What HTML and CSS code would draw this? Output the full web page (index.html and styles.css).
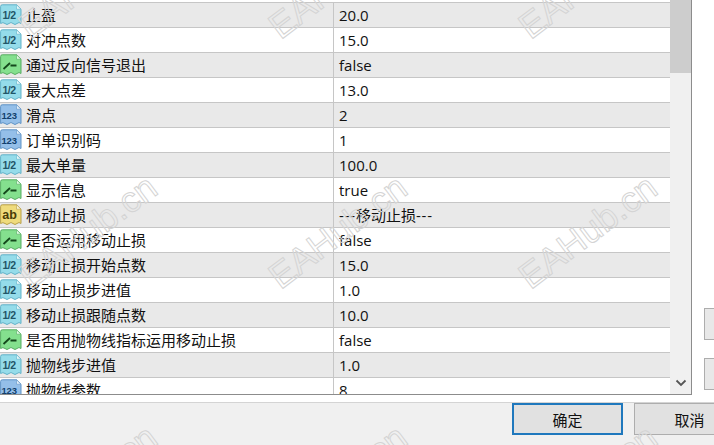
FILE: index.html
```html
<!DOCTYPE html>
<html lang="zh">
<head>
<meta charset="utf-8">
<title>EA</title>
<link rel="stylesheet" href="styles.css">
</head>
<body>
<svg class="defs" width="0" height="0">
  <defs>
    <path id="doc" d="M.6 2.5 Q.6 .8 2.3 .8 H16.5 L21 5.2 V19.5 Q19 17.5 17 19.5 Q15 21.5 13 19.5 Q11 17.5 9 19.5 Q7 21.5 5 19.5 Q3 17.8 .6 19.5 Z"/>
    <path id="fold" d="M16.5 .8 V5.2 H21 Z"/>
    <g id="i-half">
      <use href="#doc" fill="#95dcea" stroke="#62b3c9"/>
      <use href="#fold" fill="#e6f8fb" stroke="#62b3c9" stroke-width=".6"/>
      <text x="2.6" y="14.5" class="glyph half">1/2</text>
    </g>
    <g id="i-int">
      <use href="#doc" fill="#94bfe9" stroke="#5f93c6"/>
      <use href="#fold" fill="#e3effa" stroke="#5f93c6" stroke-width=".6"/>
      <text x="1.4" y="15" class="glyph int">123</text>
    </g>
    <g id="i-bool">
      <use href="#doc" fill="#84e08e" stroke="#57ad62"/>
      <use href="#fold" fill="#e2fae5" stroke="#57ad62" stroke-width=".6"/>
      <path d="M3.5 15 L10 9 M10.5 11.5 H16.5" fill="none" stroke="#14481c" stroke-width="1.8"/>
    </g>
    <g id="i-str">
      <use href="#doc" fill="#efdb7c" stroke="#b8a048"/>
      <use href="#fold" fill="#fbf5d6" stroke="#b8a048" stroke-width=".6"/>
      <text x="2.2" y="15" class="glyph str">ab</text>
    </g>
  </defs>
</svg>
<div class="dialog">
  <div class="top">
    <div class="panel">
      <div class="list">
        <div class="sliver"></div>
        <div class="row odd"><div class="name"><svg class="ico" viewBox="0 0 22 22"><use href="#i-half"/></svg>止盈</div><div class="val">20.0</div></div>
        <div class="row"><div class="name"><svg class="ico" viewBox="0 0 22 22"><use href="#i-half"/></svg>对冲点数</div><div class="val">15.0</div></div>
        <div class="row odd"><div class="name"><svg class="ico" viewBox="0 0 22 22"><use href="#i-bool"/></svg>通过反向信号退出</div><div class="val">false</div></div>
        <div class="row"><div class="name"><svg class="ico" viewBox="0 0 22 22"><use href="#i-half"/></svg>最大点差</div><div class="val">13.0</div></div>
        <div class="row odd"><div class="name"><svg class="ico" viewBox="0 0 22 22"><use href="#i-int"/></svg>滑点</div><div class="val">2</div></div>
        <div class="row"><div class="name"><svg class="ico" viewBox="0 0 22 22"><use href="#i-int"/></svg>订单识别码</div><div class="val">1</div></div>
        <div class="row odd"><div class="name"><svg class="ico" viewBox="0 0 22 22"><use href="#i-half"/></svg>最大单量</div><div class="val">100.0</div></div>
        <div class="row"><div class="name"><svg class="ico" viewBox="0 0 22 22"><use href="#i-bool"/></svg>显示信息</div><div class="val">true</div></div>
        <div class="row odd"><div class="name"><svg class="ico" viewBox="0 0 22 22"><use href="#i-str"/></svg>移动止损</div><div class="val"><span class="dash">---</span>移动止损<span class="dash">---</span></div></div>
        <div class="row"><div class="name"><svg class="ico" viewBox="0 0 22 22"><use href="#i-bool"/></svg>是否运用移动止损</div><div class="val">false</div></div>
        <div class="row odd"><div class="name"><svg class="ico" viewBox="0 0 22 22"><use href="#i-half"/></svg>移动止损开始点数</div><div class="val">15.0</div></div>
        <div class="row"><div class="name"><svg class="ico" viewBox="0 0 22 22"><use href="#i-half"/></svg>移动止损步进值</div><div class="val">1.0</div></div>
        <div class="row odd"><div class="name"><svg class="ico" viewBox="0 0 22 22"><use href="#i-half"/></svg>移动止损跟随点数</div><div class="val">10.0</div></div>
        <div class="row"><div class="name"><svg class="ico" viewBox="0 0 22 22"><use href="#i-bool"/></svg>是否用抛物线指标运用移动止损</div><div class="val">false</div></div>
        <div class="row odd"><div class="name"><svg class="ico" viewBox="0 0 22 22"><use href="#i-half"/></svg>抛物线步进值</div><div class="val">1.0</div></div>
        <div class="row"><div class="name"><svg class="ico" viewBox="0 0 22 22"><use href="#i-int"/></svg>抛物线参数</div><div class="val">8</div></div>
      </div>
      <div class="scrollbar">
        <div class="thumb"></div>
        <svg class="arrow" width="12" height="8" viewBox="0 0 12 8"><path d="M1.5 1.5 L6 6 L10.5 1.5" fill="none" stroke="#555" stroke-width="1.8"/></svg>
      </div>
    </div>
    <div class="side">
      <div class="sidebtn"></div>
      <div class="sidebtn"></div>
    </div>
  </div>
  <div class="footer">
    <button class="btn primary">确定</button>
    <button class="btn">取消</button>
  </div>
  <div class="marks">
    <span class="mark m1">EAHub.cn</span>
    <span class="mark m2">EAHub.cn</span>
    <span class="mark m3">EAHub.cn</span>
    <span class="mark m4">EAHub.cn</span>
    <span class="mark m5">EAHub.cn</span>
    <span class="mark m6">EAHub.cn</span>
    <span class="mark m7">EAHub.cn</span>
    <span class="mark m8">EAHub.cn</span>
    <span class="mark m9">EAHub.cn</span>
  </div>
</div>
</body>
</html>
```
FILE: styles.css
```css
* { box-sizing: border-box; }
html, body { margin: 0; padding: 0; }
body {
  width: 714px;
  height: 445px;
  overflow: hidden;
  background: #fff;
  font-family: "Open Sans", "Noto Sans CJK SC", sans-serif;
  color: #111;
}
.defs { position: absolute; }
.glyph { font-family: "Liberation Sans", sans-serif; font-weight: 700; }
.half { font-size: 10.5px; letter-spacing: -.6px; fill: #1f5567; }
.int { font-size: 9.5px; letter-spacing: -.1px; fill: #123f6e; }
.str { font-size: 12.5px; fill: #4a3c08; }

.dialog { position: relative; width: 714px; height: 445px; display: flex; flex-direction: column; overflow: hidden; }
.top { height: 402px; display: flex; background: #fff; flex: none; }
.panel {
  width: 692px;
  height: 395px;
  display: flex;
  border-right: 1px solid #8c8c8c;
  border-bottom: 1px solid #8c8c8c;
  flex: none;
}
.list { width: 670px; height: 394px; overflow: hidden; flex: none; }
.sliver { height: 3px; border-bottom: 1px solid #c6c6c6; }
.row {
  height: 25px;
  display: flex;
  align-items: center;
  border-bottom: 1px solid #c6c6c6;
  background: #fff;
  font-size: 15px;
  line-height: 24px;
  white-space: nowrap;
}
.row.odd { background: #e9e9e9; }
.name { width: 334px; height: 24px; display: flex; align-items: center; border-right: 1px solid #c6c6c6; }
.ico { width: 22px; height: 22px; margin-right: 4px; flex: none; }
.val { padding-left: 5px; font-size: 15px; }
.dash { letter-spacing: .8px; }

.scrollbar { width: 21px; background: #f0f0f0; position: relative; display: flex; flex-direction: column; align-items: center; justify-content: space-between; padding-bottom: 7px; flex: none; }
.thumb { width: 100%; height: 73px; background: #cdcdcd; }
.arrow { display: block; }

.side { flex: 1; display: flex; flex-direction: column; align-items: flex-end; gap: 18px; padding-top: 308px; }
.sidebtn { width: 10px; height: 32px; background: #e8e8e8; border: 1px solid #adadad; border-right: 0; }

.footer {
  flex: 1;
  background: #f0f0f0;
  border-top: 1px solid #d4d4d4;
  display: flex;
  gap: 11px;
  padding-left: 512px;
  align-items: flex-start;
}
.btn {
  width: 111px;
  height: 32px;
  flex: none;
  background: #e1e1e1;
  border: 1px solid #adadad;
  font-family: "Noto Sans CJK SC", sans-serif;
  font-size: 15px;
  color: #111;
  padding: 0;
}
.btn.primary { border: 2px solid #1f78bd; }

.marks { position: absolute; inset: 0; pointer-events: none; }
.mark {
  position: absolute;
  font-family: "Liberation Sans", sans-serif;
  font-size: 36px;
  line-height: 1;
  color: transparent;
  -webkit-text-stroke: 1px #d4d4d4;
  transform-origin: 0 100%;
  transform: rotate(-37deg);
  white-space: nowrap;
}
.m1 { left: 284px; top: 9px; }
.m2 { left: 534px; top: 9px; }
.m3 { left: 34px; top: 259px; }
.m4 { left: 284px; top: 259px; }
.m5 { left: 534px; top: 259px; }
.m6 { left: 34px; top: 9px; }
.m7 { left: 34px; top: 509px; }
.m8 { left: 284px; top: 509px; }
.m9 { left: 534px; top: 509px; }
```
